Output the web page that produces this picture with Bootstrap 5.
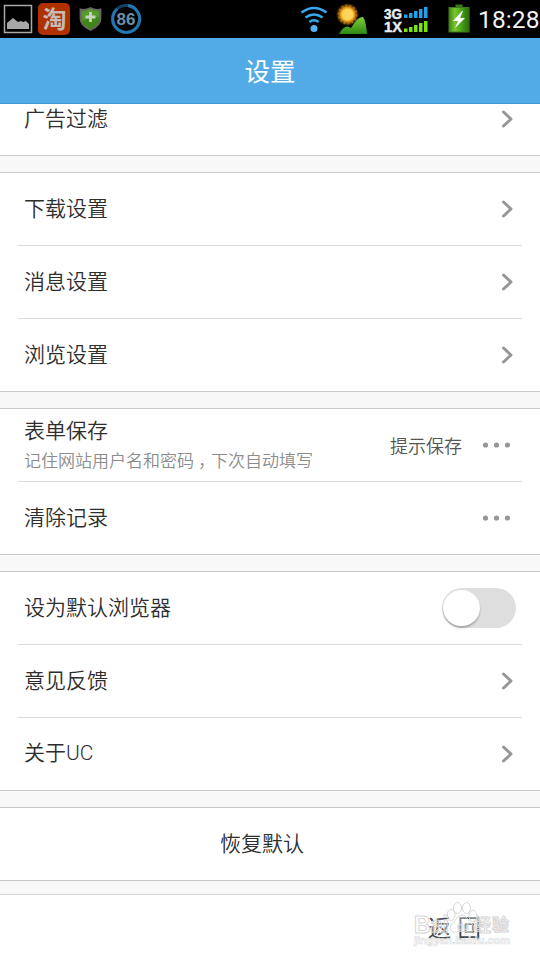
<!DOCTYPE html>
<html lang="zh-CN">
<head>
<meta charset="utf-8">
<meta name="viewport" content="width=device-width, initial-scale=1">
<title>设置</title>
<link href="https://cdn.jsdelivr.net/npm/bootstrap@5.3.0/dist/css/bootstrap.min.css" rel="stylesheet">
<style>
body{font-family:"Noto Sans CJK SC",sans-serif;font-size:21px;line-height:30px;color:#2e2e2e;background:#f8f8f8;font-weight:350}
.screen{width:540px;height:960px}
.status{height:38px;background:#000}
.status svg{display:block}
.titlebar{height:66px;background:#52abe6;border-bottom:1px solid #3d97d5;font-size:25.5px;padding-bottom:2px;font-weight:400}
.group{background:#fff;border-top:1px solid #c9c9c9;border-bottom:1px solid #c9c9c9;margin-bottom:16px;padding:0 18px}
.item{height:73px;padding:0 6px;border-bottom:1px solid #dadada}
.item:last-child{height:72px;border-bottom:0}
.item>.label{padding-bottom:4px}
.first-group{border-top:0;height:52px;overflow:hidden}
.first-group .item{margin-top:-21px}
.main-line{margin-top:-3px}
.hint{font-size:17px;line-height:26px;color:#8c8c8c;margin-top:3px}
.comma{display:inline-block;width:17px;padding-left:4px;white-space:nowrap}
.latin{font-family:Roboto,sans-serif}
.state{font-size:18px;color:#555;margin-right:20px;padding-bottom:1px}
.chev{margin-right:3px}
.dots{margin-right:5px;margin-bottom:1px}
.toggle{width:74px;height:40px;border-radius:20px;background:#dedede;padding:2px 1px}
.knob{width:37px;height:36px;border-radius:50%;background:#fff;box-shadow:0 2px 2px rgba(0,0,0,.25)}
.foot{background:#fff;border-top:1px solid #d6d6d6;margin-top:-3px}
.back{font-size:23.5px;right:59px;top:17px;color:#404549;font-weight:400;word-spacing:1px}
.wm{right:23px;top:4px}
</style>
</head>
<body>
<div class="screen d-flex flex-column overflow-hidden">
  <header class="status flex-shrink-0">
    <svg width="540" height="38" viewBox="0 0 540 38">
      <defs>
        <linearGradient id="hill" x1="0" y1="0" x2="0" y2="1"><stop stop-color="#7bd038"/><stop offset="1" stop-color="#2e8713"/></linearGradient>
        <linearGradient id="bat" x1="0" x2="1" y1="0" y2="0"><stop stop-color="#3e8a16"/><stop offset=".3" stop-color="#7bc62e"/><stop offset=".6" stop-color="#4ca51b"/><stop offset="1" stop-color="#276b0b"/></linearGradient>
        <radialGradient id="sun"><stop stop-color="#fff6a0"/><stop offset=".45" stop-color="#ffc83a"/><stop offset=".62" stop-color="#d98a12"/><stop offset="1" stop-color="#4a2a00" stop-opacity="0"/></radialGradient>
      </defs>
      <rect x="4.500" y="5.500" width="27" height="27" fill="none" stroke="#a8a8a8" stroke-width="1.500"/>
      <path d="M7 29v-6l6-5 5 4 3-1 2 1 3-1 3 3v5z" fill="#a8a8a8"/>
      <rect x="38" y="3" width="32" height="32" rx="5" fill="#b03000"/>
      <text x="54.500" y="27.500" text-anchor="middle" font-size="24" font-weight="700" fill="#c6bbb6">淘</text>
      <path d="M90.500 8q-5 2.500-10 1.500v9q0 7 10 11.500 10-4.500 10-11.500v-9q-5 1-10-1.500z" fill="#3f8618" stroke="#666" stroke-width="1.800"/>
      <path d="M82 11q4 0 8.500-2 4.500 2 8.500 2v6q-8 0-17 4z" fill="#67a63c" opacity=".6"/>
      <path d="M90.500 12v10M85.500 17h10" stroke="#c8d4bf" stroke-width="2.800"/>
      <circle cx="126" cy="19" r="13.500" fill="none" stroke="#17405f" stroke-width="3"/>
      <path d="M128 5.500A13.500 13.500 0 1 1 117 9" fill="none" stroke="#2376b0" stroke-width="3"/>
      <text x="126" y="25" text-anchor="middle" font-family="Liberation Sans,sans-serif" font-size="17" font-weight="700" fill="#6a8faa">86</text>
      <g fill="none" stroke="#36a9f0" stroke-width="2.600">
        <path d="M301.500 12.500Q314 3.500 326.500 12.500M305.500 17.500Q314 11.500 322.500 17.500M309.500 22Q314 18.500 318.500 22"/>
      </g>
      <circle cx="314" cy="28.500" r="3.500" fill="#52b6f5"/>
      <circle cx="347.500" cy="14.500" r="12" fill="url(#sun)"/>
      <circle cx="347.500" cy="14.500" r="9" fill="none" stroke="#b97b18" stroke-width="2" stroke-dasharray="2 2" opacity=".7"/>
      <circle cx="347.500" cy="14.500" r="5.500" fill="#ffd45a"/>
      <path d="M339 34q6-11 12-6 7-12 12-11 3 4 4 17z" fill="url(#hill)"/>
      <g font-family="Liberation Sans,sans-serif" font-size="14" font-weight="700" fill="#e8edf5" stroke="#e8edf5" stroke-width=".4">
        <text x="384" y="18.500" textLength="18" lengthAdjust="spacingAndGlyphs">3G</text>
        <text x="384" y="32" textLength="18" lengthAdjust="spacingAndGlyphs">1X</text>
      </g>
      <path d="M404 14.500h3.500V18H404zM409 13h3.500v5H409zM414 11h3.500v7H414zM419 9h3.500v9H419zM424 7h3.500v11H424z" fill="#219fe8"/>
      <path d="M404 28.500h3.500V32H404zM409 27h3.500v5H409zM414 25h3.500v7H414zM419 23h3.500v9H419zM424 21h3.500v11H424z" fill="#7be012"/>
      <rect x="455.500" y="4.500" width="7" height="4" fill="#397a14"/>
      <rect x="449" y="7.500" width="20" height="24.500" fill="url(#bat)" stroke="#48751f"/>
      <path d="M462 11l-9 10h5l-3 7 10-10h-5l3-7z" fill="#fff"/>
      <text x="478" y="28" font-family="Roboto,sans-serif" font-size="24.500" font-weight="400" fill="#f4f4f4" textLength="61.500">18:28</text>
    </svg>
  </header>
  <nav class="titlebar flex-shrink-0 d-flex align-items-center justify-content-center text-white">设置</nav>

  <svg class="d-none">
    <symbol id="chevron" viewBox="0 0 12 18"><path d="M2.500 2l7.500 7-7.500 7" fill="none" stroke="#969696" stroke-width="3" stroke-linecap="round" stroke-linejoin="round"/></symbol>
    <symbol id="more" viewBox="0 0 29 6"><g fill="#969696"><circle cx="3.500" cy="3" r="2.600"/><circle cx="14.500" cy="3" r="2.600"/><circle cx="25.500" cy="3" r="2.600"/></g></symbol>
  </svg>

  <main class="flex-shrink-0">
    <section class="group first-group">
      <div class="item d-flex align-items-center justify-content-between"><span class="label">广告过滤</span><svg class="chev" width="12" height="18"><use href="#chevron"/></svg></div>
    </section>
    <section class="group">
      <div class="item d-flex align-items-center justify-content-between"><span class="label">下载设置</span><svg class="chev" width="12" height="18"><use href="#chevron"/></svg></div>
      <div class="item d-flex align-items-center justify-content-between"><span class="label">消息设置</span><svg class="chev" width="12" height="18"><use href="#chevron"/></svg></div>
      <div class="item d-flex align-items-center justify-content-between"><span class="label">浏览设置</span><svg class="chev" width="12" height="18"><use href="#chevron"/></svg></div>
    </section>
    <section class="group">
      <div class="item d-flex align-items-center">
        <div class="me-auto"><div class="main-line">表单保存</div><div class="hint">记住网站用户名和密码<span class="comma">，</span>下次自动填写</div></div>
        <span class="state">提示保存</span><svg class="dots" width="29" height="6"><use href="#more"/></svg>
      </div>
      <div class="item d-flex align-items-center justify-content-between"><span class="label">清除记录</span><svg class="dots" width="29" height="6"><use href="#more"/></svg></div>
    </section>
    <section class="group">
      <div class="item d-flex align-items-center justify-content-between"><span class="label">设为默认浏览器</span><div class="toggle" role="switch" aria-checked="false"><div class="knob"></div></div></div>
      <div class="item d-flex align-items-center justify-content-between"><span class="label">意见反馈</span><svg class="chev" width="12" height="18"><use href="#chevron"/></svg></div>
      <div class="item d-flex align-items-center justify-content-between"><span class="label">关于<span class="latin">UC</span></span><svg class="chev" width="12" height="18"><use href="#chevron"/></svg></div>
    </section>
    <section class="group">
      <div class="item d-flex align-items-center justify-content-center"><span class="label me-3">恢复默认</span></div>
    </section>
  </main>
  <footer class="foot flex-grow-1 position-relative">
    <div class="back position-absolute">返 回</div>
    <svg class="wm position-absolute" width="104" height="54" viewBox="0 0 104 54">
      <g fill="#fff" fill-opacity=".35" stroke="#d6d6d6" stroke-width="1">
        <ellipse cx="38" cy="16" rx="4" ry="5.500"/><ellipse cx="44.500" cy="9" rx="4" ry="5.500"/><ellipse cx="53.500" cy="9" rx="4" ry="5.500"/><ellipse cx="60" cy="17" rx="4" ry="5.500"/>
        <path d="M49 16c-5 0-7 7-10 9-4 4-1 9 4 8 4-1 8-1 12 0 6 1 8-4 4-8-4-3-5-9-10-9z"/>
        <text x="1" y="34" font-family="Liberation Sans,sans-serif" font-size="23" font-weight="700" textLength="35">Bai</text>
        <text x="61" y="32" font-size="17" font-weight="700" textLength="35">经验</text>
      </g>
      <text x="44" y="31" font-family="Liberation Sans,sans-serif" font-size="10" font-weight="700" fill="#d6d6d6">du</text>
      <text x="1" y="45" font-family="Liberation Sans,sans-serif" font-size="11" font-weight="700" fill="#fff" fill-opacity=".5" stroke="#dedede" stroke-width=".7" textLength="96">jingyan.baidu.com</text>
    </svg>
  </footer>
</div>
<script src="https://cdn.jsdelivr.net/npm/bootstrap@5.3.0/dist/js/bootstrap.bundle.min.js"></script>
</body>
</html>
